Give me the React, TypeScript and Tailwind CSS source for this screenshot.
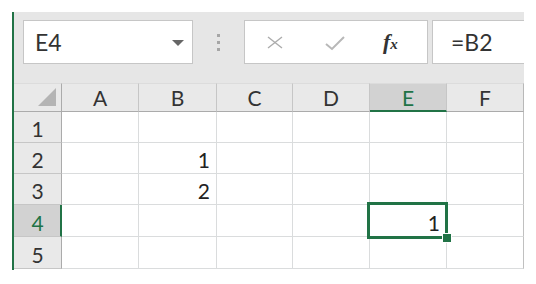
import React from "react";

const cols = ["A", "B", "C", "D", "E", "F"];
const rowHeights = [31, 31, 31, 32, 32];
const values: Record<string, string> = { "B2": "1", "B3": "2", "E4": "1" };

export default function App() {
  return (
    <div className="w-[536px] h-[284px] bg-white pt-[12px] font-['Lato',sans-serif] text-[#222]">
      <div className="ml-[12px] w-[512px] h-[258px] border-l-2 border-[#217346] flex flex-col">
        {/* toolbar */}
        <div className="h-[71px] bg-[#e6e6e6] flex items-start pt-[8px] pl-[9px]">
          <div className="w-[170px] h-[44px] bg-white border border-[#c6c6c6] flex items-center pl-[11px] pr-[8px]">
            <span className="text-[23px] leading-none text-[#333] flex-1">E4</span>
            <svg width="12" height="6" viewBox="0 0 12 6" className="mt-[1px]">
              <path d="M0 0 L12 0 L6 6 Z" fill="#666" />
            </svg>
          </div>
          <div className="w-[51px] h-[44px] flex flex-col items-center justify-center gap-[4px]">
            <div className="w-[3px] h-[3px] bg-[#a6a6a6]" />
            <div className="w-[3px] h-[3px] bg-[#a6a6a6]" />
            <div className="w-[3px] h-[3px] bg-[#a6a6a6]" />
          </div>
          <div className="w-[184px] h-[44px] bg-white border border-[#c6c6c6] flex items-center">
            <svg width="18" height="13" viewBox="0 0 18 13" className="ml-[21px]">
              <path d="M2 1 L16 12 M16 1 L2 12" stroke="#acacac" strokeWidth="1.4" fill="none" />
            </svg>
            <svg width="20" height="15" viewBox="0 0 20 15" className="ml-[41px] mt-[3px]">
              <path d="M1 8 L7 13 L19 1" stroke="#b8b8b8" strokeWidth="2" fill="none" />
            </svg>
            <span className="ml-[38px] font-['Liberation_Serif',serif] italic text-[22px] leading-none text-[#333] font-bold">
              f<span className="text-[15px]">x</span>
            </span>
          </div>
          <div className="ml-[4px] flex-1 h-[44px] bg-white border border-[#c6c6c6] border-r-0 flex items-center pl-[18px]">
            <span className="text-[23px] leading-none text-[#333]">=B2</span>
          </div>
        </div>
        {/* grid */}
        <div className="grid grid-cols-[48px_77px_78px_76px_77px_77px_77px] bg-white">
          <div className="h-[29px] bg-[#e9e9e9] border-r border-b border-[#ababab] border-t border-t-[#dcdcdc] flex items-end justify-end pr-[5px] pb-[5px]">
            <svg width="18" height="18" viewBox="0 0 18 18">
              <path d="M18 0 L18 18 L0 18 Z" fill="#b4b4b4" />
            </svg>
          </div>
          {cols.map((c) => {
            const sel = c === "E";
            return (
              <div
                key={c}
                className={
                  sel
                    ? "h-[29px] bg-[#d2d2d2] border-r border-r-[#c6c6c6] border-t border-t-[#dcdcdc] border-b-2 border-b-[#217346] flex items-center justify-center text-[21px] leading-none text-[#217346]"
                    : c === "F"
                    ? "h-[29px] bg-[#e9e9e9] border-r border-r-[#b8b8b8] border-t border-t-[#dcdcdc] border-b border-b-[#ababab] flex items-center justify-center text-[21px] leading-none text-[#333]"
                    : "h-[29px] bg-[#e9e9e9] border-r border-r-[#c6c6c6] border-t border-t-[#dcdcdc] border-b border-b-[#ababab] flex items-center justify-center text-[21px] leading-none text-[#333]"
                }
              >
                {c}
              </div>
            );
          })}
          {rowHeights.map((h, i) => {
            const r = i + 1;
            const sel = r === 4;
            return (
              <React.Fragment key={r}>
                <div
                  style={{ height: h }}
                  className={
                    sel
                      ? "bg-[#d2d2d2] border-r-2 border-r-[#217346] border-b border-b-[#c6c6c6] flex items-center justify-center pt-[3px] pl-[1px] text-[21px] leading-none text-[#217346]"
                      : "bg-[#e9e9e9] border-r border-r-[#ababab] border-b border-b-[#c6c6c6] flex items-center justify-center pt-[3px] text-[21px] leading-none text-[#333]"
                  }
                >
                  {r}
                </div>
                {cols.map((c) => {
                  const key = `${c}${r}`;
                  const v = values[key];
                  const isSel = key === "E4";
                  return (
                    <div
                      key={key}
                      style={{ height: h }}
                      className={
                        isSel
                          ? "relative z-10 border-r border-b border-[#dadcdd] flex items-center justify-end pr-[6px] pt-[3px] text-[21px] leading-none text-[#222]"
                          : c === "F"
                          ? "border-r border-r-[#c0c0c0] border-b border-b-[#dadcdd] flex items-center justify-end pr-[6px] pt-[3px] text-[21px] leading-none text-[#222]"
                          : "border-r border-b border-[#dadcdd] flex items-center justify-end pr-[6px] pt-[3px] text-[21px] leading-none text-[#222]"
                      }
                    >
                      {v}
                      {isSel && (
                        <>
                          <div className="absolute left-[-3px] top-[-3px] right-[-2px] bottom-[-3px] border-[3px] border-[#217346]" />
                          <div className="absolute right-[-6px] bottom-[-7px] w-[10px] h-[10px] bg-[#217346] border border-white" />
                        </>
                      )}
                    </div>
                  );
                })}
              </React.Fragment>
            );
          })}
        </div>
      </div>
    </div>
  );
}
